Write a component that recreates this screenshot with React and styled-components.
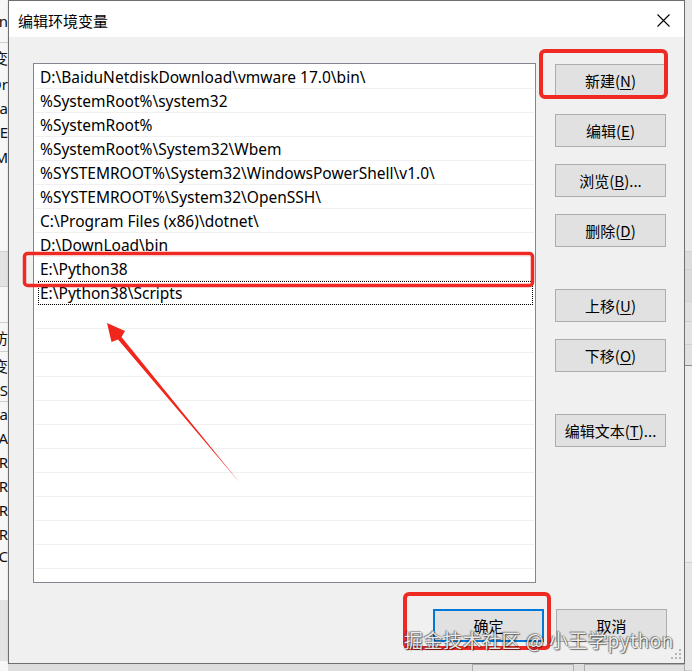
import React from 'react';
import styled, { createGlobalStyle } from 'styled-components';

const Global = createGlobalStyle`
  html, body { margin: 0; padding: 0; }
  body {
    width: 692px; height: 671px; overflow: hidden;
    background: #e6e6e6;
    font-family: "Noto Sans", "Noto Sans CJK SC", sans-serif;
  }
  * { box-sizing: border-box; }
`;

const Desktop = styled.div`
  position: relative;
  width: 692px;
  height: 671px;
  overflow: hidden;
  display: flex;
  background: #e6e6e6;
`;

/* ---------- background window pieces ---------- */
const LeftStrip = styled.div`
  width: 8px;
  flex: none;
  display: flex;
  flex-direction: column;
  background: #f7f7f7;
  overflow: hidden;
`;

const StripCell = styled.div`
  height: ${p => p.$h}px;
  flex: none;
  display: flex;
  align-items: center;
  justify-content: flex-end;
  font: 15px "Noto Sans", "Noto Sans CJK SC", sans-serif;
  color: #111;
  white-space: nowrap;
  background: ${p => p.$bg || 'transparent'};
  border-bottom: ${p => (p.$line ? '1px solid #cfcfcf' : 'none')};
  overflow: hidden;
`;

const Middle = styled.div`
  width: 677px;
  flex: none;
  display: flex;
  flex-direction: column;
`;

const BottomStrip = styled.div`
  height: 8px;
  flex: none;
  display: flex;
  align-items: flex-start;
  padding-left: 464px;
  gap: 10px;
  background: #dedede;
`;

const BgButton = styled.div`
  width: 110px;
  height: 12px;
  background: #e1e1e1;
  border: 1px solid #adadad;
`;

const RightStrip = styled.div`
  flex: 1;
  display: flex;
  flex-direction: column;
  background: #e9e9e9;
`;

const RightCell = styled.div`
  height: ${p => p.$h}px;
  flex: none;
  background: ${p => p.$bg || 'transparent'};
  border-bottom: 1px solid ${p => p.$c || '#d0d0d0'};
`;

/* ---------- dialog ---------- */
const Dialog = styled.div`
  width: 677px;
  height: 664px;
  flex: none;
  border: 1px solid #6f6f6f;
  background: #f0f0f0;
  display: flex;
  flex-direction: column;
  box-shadow: 1px 1px 3px rgba(0,0,0,0.25);
`;

const TitleBar = styled.div`
  height: 36px;
  flex: none;
  background: #ffffff;
  display: flex;
  align-items: center;
  justify-content: space-between;
  padding: 2px 14px 0 9px;
`;

const Title = styled.div`
  font: 15px "Noto Sans CJK SC", sans-serif;
  color: #000;
`;

const CloseBox = styled.div`
  width: 14px;
  height: 14px;
  display: flex;
  align-items: center;
  justify-content: center;
`;

const Body = styled.div`
  flex: 1;
  display: flex;
  flex-direction: column;
  padding: 26px 17px 0 24px;
`;

const MainRow = styled.div`
  display: flex;
  gap: 19px;
`;

const ListBox = styled.div`
  width: 503px;
  height: 520px;
  flex: none;
  border: 1px solid #828790;
  background: #fff;
  padding: 1px;
  overflow: hidden;
`;

const Row = styled.div`
  position: relative;
  height: 24px;
  border-bottom: 1px solid #f0f0f0;
  display: flex;
  align-items: center;
  padding-left: 5px;
  font: 15.5px "Noto Sans", "Noto Sans CJK SC", sans-serif;
  color: #000;
  white-space: nowrap;
  &::after {
    content: "";
    display: ${p => (p.$focus ? 'block' : 'none')};
    position: absolute;
    left: 3px; right: 1px; top: 0; bottom: -1px;
    border: 1px dotted #000;
  }
`;

const Side = styled.div`
  width: 111px;
  flex: none;
  display: flex;
  flex-direction: column;
  padding-top: 1px;
`;

const Button = styled.div`
  width: ${p => p.$w || 111}px;
  height: 33px;
  margin-top: ${p => p.$mt || 0}px;
  flex: none;
  display: flex;
  align-items: center;
  justify-content: center;
  background: #e1e1e1;
  border: ${p => (p.$default ? '2px solid #0078d7' : '1px solid #adadad')};
  font: 15px "Noto Sans CJK SC", sans-serif;
  color: #000;
  u { text-decoration-thickness: 1px; text-underline-offset: 2px; }
`;

const Footer = styled.div`
  display: flex;
  justify-content: flex-end;
  gap: 12px;
  margin-top: 26px;
`;

/* ---------- overlays ---------- */
const Overlay = styled.svg`
  position: absolute;
  left: 0; top: 0;
  width: 692px; height: 671px;
  pointer-events: none;
`;

const Watermark = styled.div`
  position: absolute;
  left: 404px;
  top: 626px;
  font: 19px "Noto Sans CJK SC", sans-serif;
  color: rgba(255,255,255,0.92);
  letter-spacing: 0.5px;
  white-space: nowrap;
  text-shadow: 0 0 1px rgba(0,0,0,0.75), 1px 1px 1px rgba(0,0,0,0.5), -1px -1px 1px rgba(0,0,0,0.3);
  pointer-events: none;
`;

const Grip = styled.svg`
  position: absolute;
  left: 670px;
  top: 648px;
`;

const paths = [
  'D:\\BaiduNetdiskDownload\\vmware 17.0\\bin\\',
  '%SystemRoot%\\system32',
  '%SystemRoot%',
  '%SystemRoot%\\System32\\Wbem',
  '%SYSTEMROOT%\\System32\\WindowsPowerShell\\v1.0\\',
  '%SYSTEMROOT%\\System32\\OpenSSH\\',
  'C:\\Program Files (x86)\\dotnet\\',
  'D:\\DownLoad\\bin',
  'E:\\Python38',
  'E:\\Python38\\Scripts',
];

const leftCells = [
  { h: 43, t: 'n', line: true },
  { h: 29, t: '变' },
  { h: 24, t: 'Or' },
  { h: 24, t: 'a' },
  { h: 24, t: 'E' },
  { h: 26, t: 'M' },
  { h: 82, t: '', line: true },
  { h: 35, t: '', bg: '#e3e3e3', line: true },
  { h: 36, t: '', line: true },
  { h: 29, t: '访', line: true },
  { h: 27, t: '变' },
  { h: 23, t: 'OS', line: true },
  { h: 24, t: 'a' },
  { h: 24, t: 'A' },
  { h: 24, t: 'R' },
  { h: 24, t: 'R' },
  { h: 24, t: 'R' },
  { h: 24, t: 'R' },
  { h: 20, t: 'C' },
  { h: 34, t: '' },
  { h: 61, t: '', bg: '#e4e4e4' },
];

const rightCells = [
  { h: 252, bg: '#e8e8e8' },
  { h: 18, bg: '#dcdcdc' },
  { h: 32, bg: '#dadada' },
  { h: 20, bg: '#e0e0e0' },
  { h: 23, bg: '#e3e3e3' },
  { h: 21, bg: '#e0e0e0', c: '#8a8a8a' },
  { h: 197, bg: '#ececec' },
  { h: 108, bg: '#e6e6e6' },
];

const Mn = ({ label, k, tail }) => (
  <>
    {label}(<u>{k}</u>){tail || ''}
  </>
);

export default function App() {
  const rows = [];
  for (let i = 0; i < 22; i++) {
    rows.push(
      <Row key={i} $focus={i === 9}>
        {paths[i] || ''}
      </Row>
    );
  }
  return (
    <>
      <Global />
      <Desktop>
        <LeftStrip>
          {leftCells.map((c, i) => (
            <StripCell key={i} $h={c.h} $bg={c.bg} $line={c.line}>
              {c.t}
            </StripCell>
          ))}
        </LeftStrip>
        <Middle>
          <Dialog>
            <TitleBar>
              <Title>编辑环境变量</Title>
              <CloseBox>
                <svg width="13" height="13" viewBox="0 0 13 13">
                  <path d="M0.5 0.5 L12.5 12.5 M12.5 0.5 L0.5 12.5" stroke="#000" strokeWidth="1.1" fill="none" />
                </svg>
              </CloseBox>
            </TitleBar>
            <Body>
              <MainRow>
                <ListBox>{rows}</ListBox>
                <Side>
                  <Button><Mn label="新建" k="N" /></Button>
                  <Button $mt={17}><Mn label="编辑" k="E" /></Button>
                  <Button $mt={17}><Mn label="浏览" k="B" tail="..." /></Button>
                  <Button $mt={17}><Mn label="删除" k="D" /></Button>
                  <Button $mt={42}><Mn label="上移" k="U" /></Button>
                  <Button $mt={17}><Mn label="下移" k="O" /></Button>
                  <Button $mt={42}><Mn label="编辑文本" k="T" tail="..." /></Button>
                </Side>
              </MainRow>
              <Footer>
                <Button $default $w={111}>确定</Button>
                <Button>取消</Button>
              </Footer>
            </Body>
          </Dialog>
          <BottomStrip>
            <BgButton />
            <BgButton />
          </BottomStrip>
        </Middle>
        <RightStrip>
          {rightCells.map((c, i) => (
            <RightCell key={i} $h={c.h} $bg={c.bg} $c={c.c} />
          ))}
        </RightStrip>

        <Overlay viewBox="0 0 692 671">
          <g fill="none" stroke="#ee2a22" strokeLinejoin="round">
            <rect x="541" y="51" width="125" height="46" rx="4" strokeWidth="4" />
            <rect x="24.5" y="253.5" width="508" height="32" rx="3" strokeWidth="3.5" />
            <rect x="405" y="594" width="144" height="54" rx="4" strokeWidth="4" />
          </g>
          <polygon
            fill="#f0261c"
            points="107,323 125,331 121.5,337 240,483 118,339.5 111.5,342"
          />
        </Overlay>
        <Grip width="12" height="12" viewBox="0 0 12 12">
          {[[9, 1], [9, 5], [5, 5], [9, 9], [5, 9], [1, 9]].map(([x, y], i) => (
            <rect key={i} x={x} y={y} width="2" height="2" fill="#b5b5b5" />
          ))}
        </Grip>
        <Watermark>掘金技术社区 @ 小王学python</Watermark>
      </Desktop>
    </>
  );
}
